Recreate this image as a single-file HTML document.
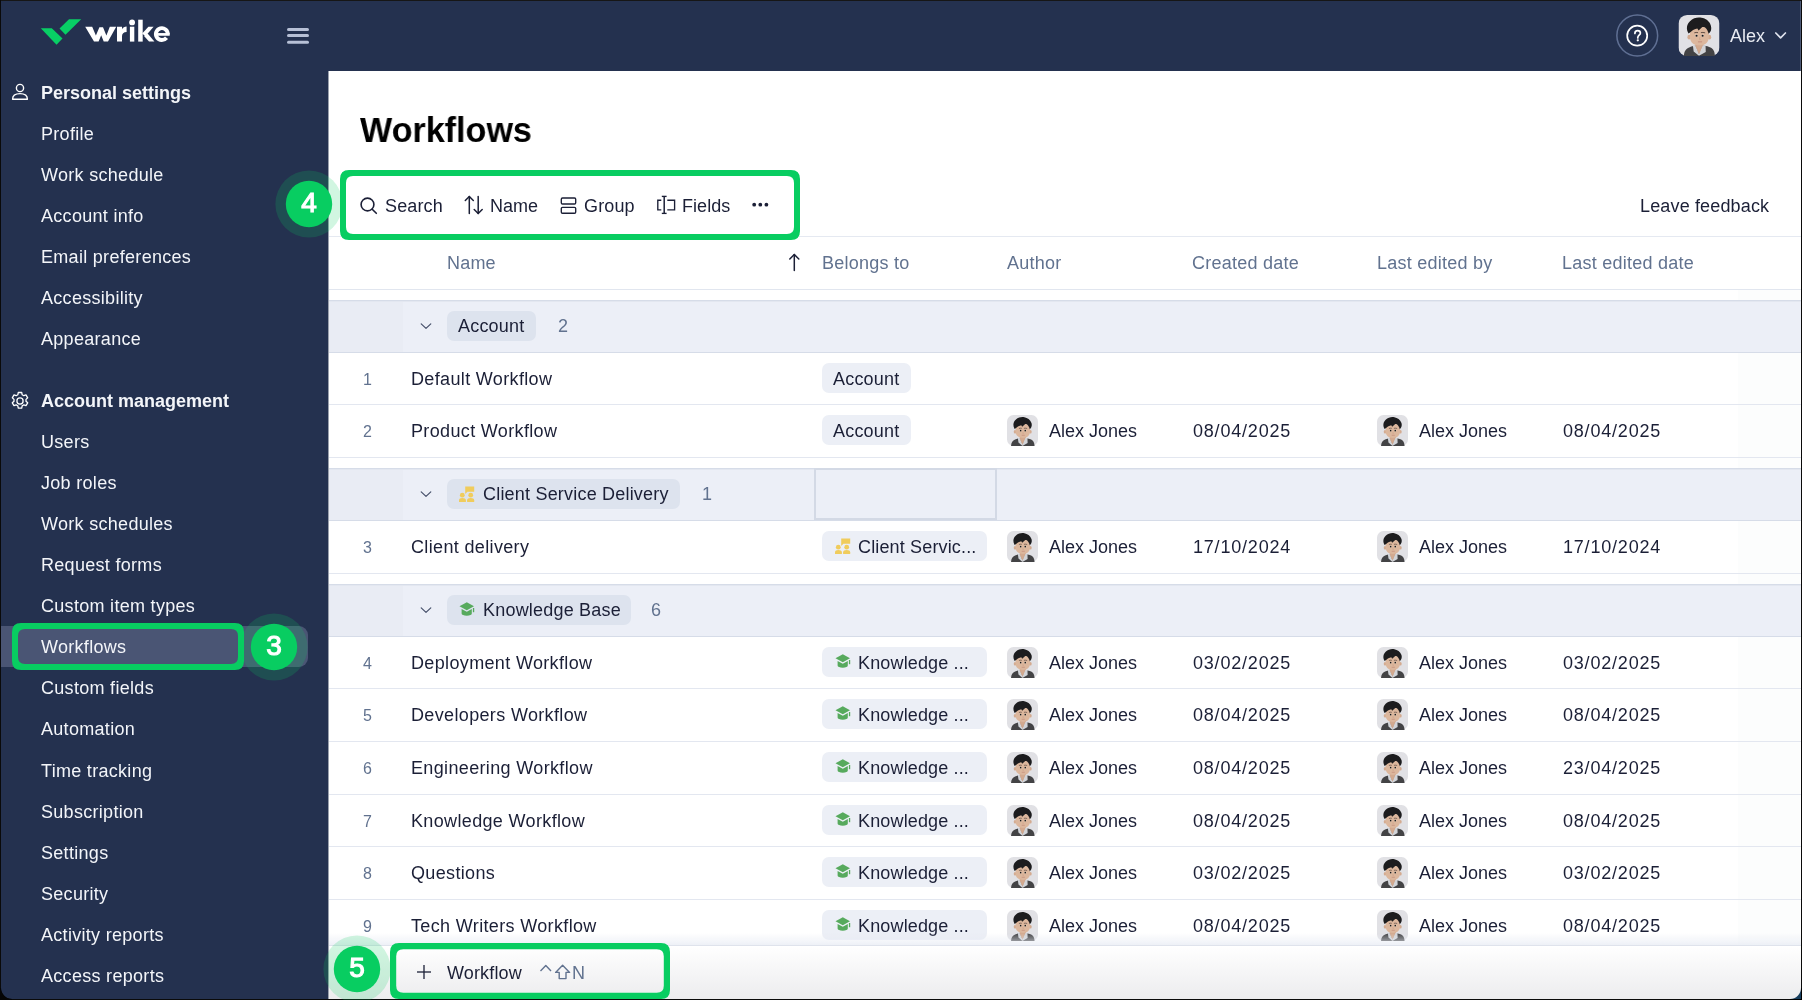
<!DOCTYPE html>
<html><head><meta charset="utf-8"><style>
html,body{margin:0;padding:0;}
body{width:1802px;height:1000px;background:#0a0a0a;position:relative;overflow:hidden;font-family:"Liberation Sans", sans-serif;}
.a{position:absolute;}
.t{position:absolute;white-space:nowrap;font-family:"Liberation Sans", sans-serif;will-change:transform;}
#win{position:absolute;left:1px;top:1px;width:1800px;height:998px;background:#24314f;border-radius:0 0 11px 11px;overflow:hidden;box-shadow:0 -1px 0 #161616;}
#panel{position:absolute;left:327px;top:70px;width:1473px;height:928px;background:#fff;}
</style></head><body>
<svg width="0" height="0" style="position:absolute"><defs><symbol id="av" viewBox="0 0 100 100">
<rect x="0" y="0" width="100" height="100" rx="21" fill="#e1e1e5"/>
<path d="M13,100 C14,88 18,82 26,79 C31,77 36,75.5 40,75 L63,75 C68,75.5 73,77 78,79 C85,82 88,88 89,100 Z" fill="#434345"/>
<path d="M41,66 L61,66 L61,78 L50,95 L41,78 Z" fill="#d3aa90"/>
<path d="M35,74 L41,74.5 L50,95 L59,74.5 L66,74 L66.5,90 L51,99 L49,99 L37,89 Z" fill="#d2d4d8"/>
<path d="M41,74.5 L50,95 L59,74.5 L57,74 L50,88 L43,74 Z" fill="#cfa78d"/>
<ellipse cx="26" cy="54" rx="4.2" ry="6" fill="#d4ab90"/>
<ellipse cx="75.5" cy="54" rx="4.2" ry="6" fill="#d4ab90"/>
<path d="M28,46 C28,34 36,27 51,27 C66,27 74,34 74,46 L74,54 C74,66 65,74 51,74 C37,74 28,66 28,54 Z" fill="#dcb79d"/>
<path d="M24.5,45 C18,34 20,22 28,15 C36,7 48,5 56,7 C66,9 75,14 79,26 C81,34 80,40 73.5,46 C72,40 69,33 64,30 C61,29 59,29 58,29.5 L49,38 L46,33 C40,34 33,38 30.5,41 Z" fill="#1c1c1e"/>
<ellipse cx="43.7" cy="50.3" rx="3" ry="2.6" fill="#f2efee"/>
<ellipse cx="59.2" cy="50.3" rx="3" ry="2.6" fill="#f2efee"/>
<circle cx="44" cy="50.5" r="2.6" fill="#161616"/>
<circle cx="58.9" cy="50.5" r="2.6" fill="#161616"/>
<path d="M38.5,43.5 C41,42.3 45,42.3 47.7,43 M54.6,43 C57,42.3 62,42.3 65,43.5" stroke="#4a3a34" stroke-width="2" fill="none"/>
<path d="M52,54 L51,59.5 L54,60" stroke="#c69a80" stroke-width="1.4" fill="none"/>
<path d="M47.5,65.5 L57.5,65.5" stroke="#c48e7c" stroke-width="2.4"/>
</symbol></defs></svg>
<div id="win"><div id="panel"></div><div class="a" style="left:1799px;top:0;width:1px;height:70px;background:#4d5a77;"></div></div>
<svg class="a" style="left:38px;top:16px;" width="140" height="32" viewBox="0 0 140 32"><polygon points="2.8,12.3 13.8,12.3 24.5,22.5 18.5,28.8" fill="#08cf65"/><polygon points="21.5,12.5 31,3.2 43.2,3.2 27.5,18.8" fill="#08cf65"/></svg>
<svg class="a" style="left:82px;top:15px;" width="92" height="30" viewBox="0 0 92 30"><g fill="#fff"><polygon points="3.2,11.7 10.2,11.7 13.9,20.6 17.4,12.3 21.0,12.3 24.4,20.6 27.8,11.7 34.2,11.7 26.0,26.6 21.7,26.6 19.2,20.2 16.6,26.6 12.0,26.6"/><path d="M35,26.6 V11.7 H40 V14.2 C41,12.5 42.6,11.6 44.6,11.6 V16.9 C41.6,16.9 40,18.6 40,21.2 V26.6 Z"/><rect x="47.9" y="11.7" width="4.4" height="14.9"/><circle cx="50.1" cy="7.4" r="2.9"/><rect x="56.2" y="4.7" width="4.5" height="21.9"/><polygon points="60.2,18.6 66.4,11.7 71.6,11.7 63.4,21.2"/><polygon points="62.0,21.0 65.6,18.4 72.4,26.6 67.0,26.6"/></g><path d="M87.70,19.40 H73.90" stroke="#fff" stroke-width="2.7"/><path d="M85.80,19.40 A5.95,5.95 0 1 0 84.54,22.76" fill="none" stroke="#fff" stroke-width="3.9"/></svg>
<svg class="a" style="left:286px;top:27px;" width="24" height="18" viewBox="0 0 24 18"><g stroke="#b7c0d6" stroke-width="3" stroke-linecap="round"><line x1="2.5" y1="2.4" x2="21.5" y2="2.4"/><line x1="2.5" y1="8.6" x2="21.5" y2="8.6"/><line x1="2.5" y1="15.2" x2="21.5" y2="15.2"/></g></svg>
<svg class="a" style="left:1615px;top:13px;" width="45" height="45" viewBox="0 0 45 45"><circle cx="22.25" cy="22.5" r="20.4" fill="none" stroke="#5f6f93" stroke-width="1.5"/><circle cx="22.2" cy="22.7" r="10" fill="none" stroke="#fff" stroke-width="1.7"/><path d="M19.9,20.4 C19.9,18.7 21,17.6 22.6,17.6 C24.3,17.6 25.4,18.7 25.4,20.1 C25.4,22.1 22.8,22.4 22.8,24.5 V25" fill="none" stroke="#fff" stroke-width="1.7" stroke-linecap="round"/><circle cx="22.8" cy="27.3" r="1.15" fill="#fff"/></svg>
<svg class="a" style="left:1678px;top:15px;" width="42" height="41" viewBox="0 0 100 100"><use href="#av"/></svg>
<div class="t" style="left:1730px;top:27px;font-size:18px;line-height:18px;color:#e8ebf2;font-weight:normal;">Alex</div>
<svg class="a" style="left:1773px;top:30px;" width="15" height="11" viewBox="0 0 15 11"><polyline points="2.8,3 7.6,7.8 12.4,3" fill="none" stroke="#e0e4ee" stroke-width="1.7" stroke-linecap="round" stroke-linejoin="round"/></svg>
<div class="a" style="left:1px;top:626px;width:307px;height:41px;background:#4a5574;border-radius:0 9px 9px 0;"></div>
<svg class="a" style="left:10px;top:82px;" width="20" height="20" viewBox="0 0 20 20"><g fill="none" stroke="#fff" stroke-width="1.4"><circle cx="10" cy="6" r="3.6"/><path d="M2.6,17.2 C2.6,13.2 6,11.6 10,11.6 C14,11.6 17.4,13.2 17.4,17.2 Z" stroke-linejoin="round"/></g></svg>
<div class="t" style="left:41px;top:84px;font-size:18px;line-height:18px;color:#f3f5f9;font-weight:bold;">Personal settings</div>
<div class="t" style="left:41px;top:125px;font-size:18px;line-height:18px;color:#f3f5f9;font-weight:normal;letter-spacing:0.3px;">Profile</div>
<div class="t" style="left:41px;top:166px;font-size:18px;line-height:18px;color:#f3f5f9;font-weight:normal;letter-spacing:0.3px;">Work schedule</div>
<div class="t" style="left:41px;top:207px;font-size:18px;line-height:18px;color:#f3f5f9;font-weight:normal;letter-spacing:0.3px;">Account info</div>
<div class="t" style="left:41px;top:248px;font-size:18px;line-height:18px;color:#f3f5f9;font-weight:normal;letter-spacing:0.3px;">Email preferences</div>
<div class="t" style="left:41px;top:289px;font-size:18px;line-height:18px;color:#f3f5f9;font-weight:normal;letter-spacing:0.3px;">Accessibility</div>
<div class="t" style="left:41px;top:330px;font-size:18px;line-height:18px;color:#f3f5f9;font-weight:normal;letter-spacing:0.3px;">Appearance</div>
<svg class="a" style="left:10px;top:391px;" width="20" height="20" viewBox="0 0 20 20"><g fill="none" stroke="#fff" stroke-width="1.3" stroke-linejoin="round"><path d="M8.3,1.5 h3.4 l0.5,2.3 l1.6,0.9 l2.2,-0.8 l1.7,2.9 l-1.7,1.6 v1.8 l1.7,1.6 l-1.7,2.9 l-2.2,-0.8 l-1.6,0.9 l-0.5,2.3 h-3.4 l-0.5,-2.3 l-1.6,-0.9 l-2.2,0.8 l-1.7,-2.9 l1.7,-1.6 v-1.8 l-1.7,-1.6 l1.7,-2.9 l2.2,0.8 l1.6,-0.9 z"/><circle cx="10" cy="10" r="3.1"/></g></svg>
<div class="t" style="left:41px;top:392px;font-size:18px;line-height:18px;color:#f3f5f9;font-weight:bold;">Account management</div>
<div class="t" style="left:41px;top:433px;font-size:18px;line-height:18px;color:#f3f5f9;font-weight:normal;letter-spacing:0.3px;">Users</div>
<div class="t" style="left:41px;top:474px;font-size:18px;line-height:18px;color:#f3f5f9;font-weight:normal;letter-spacing:0.3px;">Job roles</div>
<div class="t" style="left:41px;top:515px;font-size:18px;line-height:18px;color:#f3f5f9;font-weight:normal;letter-spacing:0.3px;">Work schedules</div>
<div class="t" style="left:41px;top:556px;font-size:18px;line-height:18px;color:#f3f5f9;font-weight:normal;letter-spacing:0.3px;">Request forms</div>
<div class="t" style="left:41px;top:597px;font-size:18px;line-height:18px;color:#f3f5f9;font-weight:normal;letter-spacing:0.3px;">Custom item types</div>
<div class="t" style="left:41px;top:638px;font-size:18px;line-height:18px;color:#f3f5f9;font-weight:normal;letter-spacing:0.3px;">Workflows</div>
<div class="t" style="left:41px;top:679px;font-size:18px;line-height:18px;color:#f3f5f9;font-weight:normal;letter-spacing:0.3px;">Custom fields</div>
<div class="t" style="left:41px;top:720px;font-size:18px;line-height:18px;color:#f3f5f9;font-weight:normal;letter-spacing:0.3px;">Automation</div>
<div class="t" style="left:41px;top:762px;font-size:18px;line-height:18px;color:#f3f5f9;font-weight:normal;letter-spacing:0.3px;">Time tracking</div>
<div class="t" style="left:41px;top:803px;font-size:18px;line-height:18px;color:#f3f5f9;font-weight:normal;letter-spacing:0.3px;">Subscription</div>
<div class="t" style="left:41px;top:844px;font-size:18px;line-height:18px;color:#f3f5f9;font-weight:normal;letter-spacing:0.3px;">Settings</div>
<div class="t" style="left:41px;top:885px;font-size:18px;line-height:18px;color:#f3f5f9;font-weight:normal;letter-spacing:0.3px;">Security</div>
<div class="t" style="left:41px;top:926px;font-size:18px;line-height:18px;color:#f3f5f9;font-weight:normal;letter-spacing:0.3px;">Activity reports</div>
<div class="t" style="left:41px;top:967px;font-size:18px;line-height:18px;color:#f3f5f9;font-weight:normal;letter-spacing:0.3px;">Access reports</div>
<div class="a" style="left:328px;top:71px;width:1px;height:928px;background:#9aa0ac;"></div>
<div class="a" style="left:1738px;top:290px;width:62px;height:655px;background:rgba(40,50,80,0.012);"></div>
<div class="t" style="left:360px;top:112px;font-size:35px;line-height:35px;color:#000;font-weight:bold;transform:scaleX(0.975);transform-origin:left">Workflows</div>
<svg class="a" style="left:358px;top:194px;" width="22" height="22" viewBox="0 0 22 22"><g fill="none" stroke="#1b1f36" stroke-width="1.6" stroke-linecap="round"><circle cx="9.5" cy="10.5" r="6.4"/><line x1="14.2" y1="15.2" x2="18.3" y2="19.3"/></g></svg>
<div class="t" style="left:385px;top:197px;font-size:18px;line-height:18px;color:#1b1f36;font-weight:normal;letter-spacing:0.15px;">Search</div>
<svg class="a" style="left:462px;top:194px;" width="24" height="22" viewBox="0 0 24 22"><g fill="none" stroke="#1b1f36" stroke-width="1.5" stroke-linecap="round" stroke-linejoin="round"><line x1="7.3" y1="2.5" x2="7.3" y2="19.5"/><polyline points="3.3,6.5 7.3,2.5 11.3,6.5"/><line x1="16.2" y1="2.5" x2="16.2" y2="19.5"/><polyline points="12.2,15.5 16.2,19.5 20.2,15.5"/></g></svg>
<div class="t" style="left:490px;top:197px;font-size:18px;line-height:18px;color:#1b1f36;font-weight:normal;">Name</div>
<svg class="a" style="left:558px;top:195px;" width="22" height="20" viewBox="0 0 22 20"><g fill="none" stroke="#1b1f36" stroke-width="1.35"><rect x="3.3" y="3" width="14.4" height="6" rx="1.2"/><rect x="3.3" y="12.4" width="14.4" height="5.8" rx="1.2"/></g></svg>
<div class="t" style="left:584px;top:197px;font-size:18px;line-height:18px;color:#1b1f36;font-weight:normal;letter-spacing:0.15px;">Group</div>
<svg class="a" style="left:655px;top:194px;" width="22" height="22" viewBox="0 0 22 22"><g fill="none" stroke="#1b1f36" stroke-width="1.35"><polyline points="6.3,6.2 2.8,6.2 2.8,15.8 6.3,15.8"/><polyline points="12.3,6.2 19.6,6.2 19.6,15.8 12.3,15.8"/><line x1="9.2" y1="2.4" x2="9.2" y2="19.4" stroke-width="1.5"/><line x1="6.8" y1="2.4" x2="11.6" y2="2.4"/><line x1="6.8" y1="19.4" x2="11.6" y2="19.4"/></g></svg>
<div class="t" style="left:682px;top:197px;font-size:18px;line-height:18px;color:#1b1f36;font-weight:normal;letter-spacing:0.05px;">Fields</div>
<svg class="a" style="left:750px;top:200px;" width="22" height="10" viewBox="0 0 22 10"><g fill="#1b1f36"><circle cx="4.2" cy="4.7" r="1.9"/><circle cx="10.3" cy="4.7" r="1.9"/><circle cx="16.4" cy="4.7" r="1.9"/></g></svg>
<div class="t" style="left:1640px;top:197px;font-size:18px;line-height:18px;color:#1b1f36;font-weight:normal;letter-spacing:0.15px;">Leave feedback</div>
<div class="a" style="left:329px;top:236px;width:1472px;height:1px;background:#e5e9f1;"></div>
<div class="a" style="left:329px;top:289px;width:1472px;height:1px;background:#e1e6ef;"></div>
<div class="t" style="left:447px;top:254px;font-size:18px;line-height:18px;color:#61728f;font-weight:normal;letter-spacing:0.2px;">Name</div>
<svg class="a" style="left:786px;top:252px;" width="16" height="20" viewBox="0 0 16 20"><g fill="none" stroke="#1b1f36" stroke-width="1.5" stroke-linecap="round" stroke-linejoin="round"><line x1="8.3" y1="2.5" x2="8.3" y2="18.5"/><polyline points="3.8,7 8.3,2.5 12.8,7"/></g></svg>
<div class="t" style="left:822px;top:254px;font-size:18px;line-height:18px;color:#61728f;font-weight:normal;letter-spacing:0.25px;">Belongs to</div>
<div class="t" style="left:1007px;top:254px;font-size:18px;line-height:18px;color:#61728f;font-weight:normal;letter-spacing:0.25px;">Author</div>
<div class="t" style="left:1192px;top:254px;font-size:18px;line-height:18px;color:#61728f;font-weight:normal;letter-spacing:0.25px;">Created date</div>
<div class="t" style="left:1377px;top:254px;font-size:18px;line-height:18px;color:#61728f;font-weight:normal;letter-spacing:0.25px;">Last edited by</div>
<div class="t" style="left:1562px;top:254px;font-size:18px;line-height:18px;color:#61728f;font-weight:normal;letter-spacing:0.25px;">Last edited date</div>
<div class="a" style="left:329px;top:300px;width:1472px;height:52px;background:#eceff7;"></div>
<div class="a" style="left:329px;top:300px;width:74px;height:52px;background:#e9ecf4;"></div>
<div class="a" style="left:329px;top:300px;width:1472px;height:1px;background:#d6dce8;"></div>
<div class="a" style="left:329px;top:301px;width:1472px;height:1px;background:#e3e7f0;"></div>
<div class="a" style="left:329px;top:352px;width:1472px;height:1px;background:#d6dce8;"></div>
<svg class="a" style="left:419px;top:321px;" width="14" height="10" viewBox="0 0 14 10"><polyline points="2.2,2.8 7,7.4 11.8,2.8" fill="none" stroke="#434d68" stroke-width="1.15" stroke-linecap="round" stroke-linejoin="round"/></svg>
<div class="a" style="left:447px;top:311px;width:89px;height:30px;background:#dde3ee;border-radius:7px;"></div>
<div class="t" style="left:458px;top:317px;font-size:18px;line-height:18px;color:#1b1f36;font-weight:normal;letter-spacing:0.2px;">Account</div>
<div class="t" style="left:558px;top:317px;font-size:18px;line-height:18px;color:#61728f;font-weight:normal;letter-spacing:0.35px;">2</div>
<div class="t" style="left:363px;top:372px;font-size:16px;line-height:16px;color:#61728f;font-weight:normal;">1</div>
<div class="t" style="left:411px;top:370px;font-size:18px;line-height:18px;color:#1b1f36;font-weight:normal;letter-spacing:0.35px;">Default Workflow</div>
<div class="a" style="left:822px;top:363px;width:89px;height:30px;background:#eceff6;border-radius:7px;"></div>
<div class="t" style="left:833px;top:370px;font-size:18px;line-height:18px;color:#1b1f36;font-weight:normal;letter-spacing:0.2px;">Account</div>
<div class="a" style="left:329px;top:404px;width:1472px;height:1px;background:#e3e7f0;"></div>
<div class="t" style="left:363px;top:424px;font-size:16px;line-height:16px;color:#61728f;font-weight:normal;">2</div>
<div class="t" style="left:411px;top:422px;font-size:18px;line-height:18px;color:#1b1f36;font-weight:normal;letter-spacing:0.35px;">Product Workflow</div>
<div class="a" style="left:822px;top:415px;width:89px;height:30px;background:#eceff6;border-radius:7px;"></div>
<div class="t" style="left:833px;top:422px;font-size:18px;line-height:18px;color:#1b1f36;font-weight:normal;letter-spacing:0.2px;">Account</div>
<svg class="a" style="left:1007px;top:415px;" width="31" height="31" viewBox="0 0 100 100"><use href="#av"/></svg>
<div class="t" style="left:1049px;top:422px;font-size:18px;line-height:18px;color:#1b1f36;font-weight:normal;">Alex Jones</div>
<div class="t" style="left:1193px;top:422px;font-size:18px;line-height:18px;color:#1b1f36;font-weight:normal;letter-spacing:0.8px;">08/04/2025</div>
<svg class="a" style="left:1377px;top:415px;" width="31" height="31" viewBox="0 0 100 100"><use href="#av"/></svg>
<div class="t" style="left:1419px;top:422px;font-size:18px;line-height:18px;color:#1b1f36;font-weight:normal;">Alex Jones</div>
<div class="t" style="left:1563px;top:422px;font-size:18px;line-height:18px;color:#1b1f36;font-weight:normal;letter-spacing:0.8px;">08/04/2025</div>
<div class="a" style="left:329px;top:457px;width:1472px;height:1px;background:#e3e7f0;"></div>
<div class="a" style="left:329px;top:468px;width:1472px;height:52px;background:#eceff7;"></div>
<div class="a" style="left:329px;top:468px;width:74px;height:52px;background:#e9ecf4;"></div>
<div class="a" style="left:329px;top:468px;width:1472px;height:1px;background:#d6dce8;"></div>
<div class="a" style="left:329px;top:469px;width:1472px;height:1px;background:#e3e7f0;"></div>
<div class="a" style="left:329px;top:520px;width:1472px;height:1px;background:#d6dce8;"></div>
<svg class="a" style="left:419px;top:489px;" width="14" height="10" viewBox="0 0 14 10"><polyline points="2.2,2.8 7,7.4 11.8,2.8" fill="none" stroke="#434d68" stroke-width="1.15" stroke-linecap="round" stroke-linejoin="round"/></svg>
<div class="a" style="left:447px;top:479px;width:233px;height:30px;background:#dde3ee;border-radius:7px;"></div>
<svg class="a" style="left:459px;top:486px;" width="16" height="16" viewBox="0 0 16 16"><g fill="#f0cc5c"><path d="M6.2,0.6 H15.2 V5.8 H8.5 L6.2,8 Z"/><circle cx="3.3" cy="9.2" r="2.4"/><path d="M0,15.9 V14.3 C0,12.9 1.4,12 3.3,12 C5.2,12 6.9,12.9 6.9,14.3 V15.9 Z"/><circle cx="11.7" cy="9.2" r="2.4"/><path d="M8.1,15.9 V14.3 C8.1,12.9 9.6,12 11.7,12 C13.8,12 15.2,12.9 15.2,14.3 V15.9 Z"/></g></svg>
<div class="t" style="left:483px;top:485px;font-size:18px;line-height:18px;color:#1b1f36;font-weight:normal;letter-spacing:0.2px;">Client Service Delivery</div>
<div class="t" style="left:702px;top:485px;font-size:18px;line-height:18px;color:#61728f;font-weight:normal;letter-spacing:0.35px;">1</div>
<div class="a" style="left:814px;top:468px;width:183px;height:52px;background:transparent;box-sizing:border-box;border:2px solid #d3d9e5;"></div>
<div class="t" style="left:363px;top:540px;font-size:16px;line-height:16px;color:#61728f;font-weight:normal;">3</div>
<div class="t" style="left:411px;top:538px;font-size:18px;line-height:18px;color:#1b1f36;font-weight:normal;letter-spacing:0.35px;">Client delivery</div>
<div class="a" style="left:822px;top:531px;width:165px;height:30px;background:#eceff6;border-radius:7px;"></div>
<svg class="a" style="left:835px;top:538px;" width="16" height="16" viewBox="0 0 16 16"><g fill="#f0cc5c"><path d="M6.2,0.6 H15.2 V5.8 H8.5 L6.2,8 Z"/><circle cx="3.3" cy="9.2" r="2.4"/><path d="M0,15.9 V14.3 C0,12.9 1.4,12 3.3,12 C5.2,12 6.9,12.9 6.9,14.3 V15.9 Z"/><circle cx="11.7" cy="9.2" r="2.4"/><path d="M8.1,15.9 V14.3 C8.1,12.9 9.6,12 11.7,12 C13.8,12 15.2,12.9 15.2,14.3 V15.9 Z"/></g></svg>
<div class="t" style="left:858px;top:538px;font-size:18px;line-height:18px;color:#1b1f36;font-weight:normal;letter-spacing:0.15px;">Client Servic...</div>
<svg class="a" style="left:1007px;top:531px;" width="31" height="31" viewBox="0 0 100 100"><use href="#av"/></svg>
<div class="t" style="left:1049px;top:538px;font-size:18px;line-height:18px;color:#1b1f36;font-weight:normal;">Alex Jones</div>
<div class="t" style="left:1193px;top:538px;font-size:18px;line-height:18px;color:#1b1f36;font-weight:normal;letter-spacing:0.8px;">17/10/2024</div>
<svg class="a" style="left:1377px;top:531px;" width="31" height="31" viewBox="0 0 100 100"><use href="#av"/></svg>
<div class="t" style="left:1419px;top:538px;font-size:18px;line-height:18px;color:#1b1f36;font-weight:normal;">Alex Jones</div>
<div class="t" style="left:1563px;top:538px;font-size:18px;line-height:18px;color:#1b1f36;font-weight:normal;letter-spacing:0.8px;">17/10/2024</div>
<div class="a" style="left:329px;top:573px;width:1472px;height:1px;background:#e3e7f0;"></div>
<div class="a" style="left:329px;top:584px;width:1472px;height:52px;background:#eceff7;"></div>
<div class="a" style="left:329px;top:584px;width:74px;height:52px;background:#e9ecf4;"></div>
<div class="a" style="left:329px;top:584px;width:1472px;height:1px;background:#d6dce8;"></div>
<div class="a" style="left:329px;top:585px;width:1472px;height:1px;background:#e3e7f0;"></div>
<div class="a" style="left:329px;top:636px;width:1472px;height:1px;background:#d6dce8;"></div>
<svg class="a" style="left:419px;top:605px;" width="14" height="10" viewBox="0 0 14 10"><polyline points="2.2,2.8 7,7.4 11.8,2.8" fill="none" stroke="#434d68" stroke-width="1.15" stroke-linecap="round" stroke-linejoin="round"/></svg>
<div class="a" style="left:447px;top:595px;width:184px;height:30px;background:#dde3ee;border-radius:7px;"></div>
<svg class="a" style="left:459px;top:602px;" width="16" height="16" viewBox="0 0 16 16"><g fill="#57aa5d"><polygon points="0.5,4.3 7.8,0.3 15,4.3 7.8,8.2"/><path d="M2.6,6.9 L7.8,9.7 L12.8,6.9 L12.8,11.6 C12.8,12.9 10.8,13.7 7.8,13.7 C4.8,13.7 2.6,12.9 2.6,11.6 Z"/><rect x="13.9" y="6" width="1.3" height="4.2"/></g></svg>
<div class="t" style="left:483px;top:601px;font-size:18px;line-height:18px;color:#1b1f36;font-weight:normal;letter-spacing:0.2px;">Knowledge Base</div>
<div class="t" style="left:651px;top:601px;font-size:18px;line-height:18px;color:#61728f;font-weight:normal;letter-spacing:0.35px;">6</div>
<div class="t" style="left:363px;top:656px;font-size:16px;line-height:16px;color:#61728f;font-weight:normal;">4</div>
<div class="t" style="left:411px;top:654px;font-size:18px;line-height:18px;color:#1b1f36;font-weight:normal;letter-spacing:0.35px;">Deployment Workflow</div>
<div class="a" style="left:822px;top:647px;width:165px;height:30px;background:#eceff6;border-radius:7px;"></div>
<svg class="a" style="left:835px;top:654px;" width="16" height="16" viewBox="0 0 16 16"><g fill="#57aa5d"><polygon points="0.5,4.3 7.8,0.3 15,4.3 7.8,8.2"/><path d="M2.6,6.9 L7.8,9.7 L12.8,6.9 L12.8,11.6 C12.8,12.9 10.8,13.7 7.8,13.7 C4.8,13.7 2.6,12.9 2.6,11.6 Z"/><rect x="13.9" y="6" width="1.3" height="4.2"/></g></svg>
<div class="t" style="left:858px;top:654px;font-size:18px;line-height:18px;color:#1b1f36;font-weight:normal;letter-spacing:0.15px;">Knowledge ...</div>
<svg class="a" style="left:1007px;top:647px;" width="31" height="31" viewBox="0 0 100 100"><use href="#av"/></svg>
<div class="t" style="left:1049px;top:654px;font-size:18px;line-height:18px;color:#1b1f36;font-weight:normal;">Alex Jones</div>
<div class="t" style="left:1193px;top:654px;font-size:18px;line-height:18px;color:#1b1f36;font-weight:normal;letter-spacing:0.8px;">03/02/2025</div>
<svg class="a" style="left:1377px;top:647px;" width="31" height="31" viewBox="0 0 100 100"><use href="#av"/></svg>
<div class="t" style="left:1419px;top:654px;font-size:18px;line-height:18px;color:#1b1f36;font-weight:normal;">Alex Jones</div>
<div class="t" style="left:1563px;top:654px;font-size:18px;line-height:18px;color:#1b1f36;font-weight:normal;letter-spacing:0.8px;">03/02/2025</div>
<div class="a" style="left:329px;top:688px;width:1472px;height:1px;background:#e3e7f0;"></div>
<div class="t" style="left:363px;top:708px;font-size:16px;line-height:16px;color:#61728f;font-weight:normal;">5</div>
<div class="t" style="left:411px;top:706px;font-size:18px;line-height:18px;color:#1b1f36;font-weight:normal;letter-spacing:0.35px;">Developers Workflow</div>
<div class="a" style="left:822px;top:699px;width:165px;height:30px;background:#eceff6;border-radius:7px;"></div>
<svg class="a" style="left:835px;top:706px;" width="16" height="16" viewBox="0 0 16 16"><g fill="#57aa5d"><polygon points="0.5,4.3 7.8,0.3 15,4.3 7.8,8.2"/><path d="M2.6,6.9 L7.8,9.7 L12.8,6.9 L12.8,11.6 C12.8,12.9 10.8,13.7 7.8,13.7 C4.8,13.7 2.6,12.9 2.6,11.6 Z"/><rect x="13.9" y="6" width="1.3" height="4.2"/></g></svg>
<div class="t" style="left:858px;top:706px;font-size:18px;line-height:18px;color:#1b1f36;font-weight:normal;letter-spacing:0.15px;">Knowledge ...</div>
<svg class="a" style="left:1007px;top:699px;" width="31" height="31" viewBox="0 0 100 100"><use href="#av"/></svg>
<div class="t" style="left:1049px;top:706px;font-size:18px;line-height:18px;color:#1b1f36;font-weight:normal;">Alex Jones</div>
<div class="t" style="left:1193px;top:706px;font-size:18px;line-height:18px;color:#1b1f36;font-weight:normal;letter-spacing:0.8px;">08/04/2025</div>
<svg class="a" style="left:1377px;top:699px;" width="31" height="31" viewBox="0 0 100 100"><use href="#av"/></svg>
<div class="t" style="left:1419px;top:706px;font-size:18px;line-height:18px;color:#1b1f36;font-weight:normal;">Alex Jones</div>
<div class="t" style="left:1563px;top:706px;font-size:18px;line-height:18px;color:#1b1f36;font-weight:normal;letter-spacing:0.8px;">08/04/2025</div>
<div class="a" style="left:329px;top:741px;width:1472px;height:1px;background:#e3e7f0;"></div>
<div class="t" style="left:363px;top:761px;font-size:16px;line-height:16px;color:#61728f;font-weight:normal;">6</div>
<div class="t" style="left:411px;top:759px;font-size:18px;line-height:18px;color:#1b1f36;font-weight:normal;letter-spacing:0.35px;">Engineering Workflow</div>
<div class="a" style="left:822px;top:752px;width:165px;height:30px;background:#eceff6;border-radius:7px;"></div>
<svg class="a" style="left:835px;top:759px;" width="16" height="16" viewBox="0 0 16 16"><g fill="#57aa5d"><polygon points="0.5,4.3 7.8,0.3 15,4.3 7.8,8.2"/><path d="M2.6,6.9 L7.8,9.7 L12.8,6.9 L12.8,11.6 C12.8,12.9 10.8,13.7 7.8,13.7 C4.8,13.7 2.6,12.9 2.6,11.6 Z"/><rect x="13.9" y="6" width="1.3" height="4.2"/></g></svg>
<div class="t" style="left:858px;top:759px;font-size:18px;line-height:18px;color:#1b1f36;font-weight:normal;letter-spacing:0.15px;">Knowledge ...</div>
<svg class="a" style="left:1007px;top:752px;" width="31" height="31" viewBox="0 0 100 100"><use href="#av"/></svg>
<div class="t" style="left:1049px;top:759px;font-size:18px;line-height:18px;color:#1b1f36;font-weight:normal;">Alex Jones</div>
<div class="t" style="left:1193px;top:759px;font-size:18px;line-height:18px;color:#1b1f36;font-weight:normal;letter-spacing:0.8px;">08/04/2025</div>
<svg class="a" style="left:1377px;top:752px;" width="31" height="31" viewBox="0 0 100 100"><use href="#av"/></svg>
<div class="t" style="left:1419px;top:759px;font-size:18px;line-height:18px;color:#1b1f36;font-weight:normal;">Alex Jones</div>
<div class="t" style="left:1563px;top:759px;font-size:18px;line-height:18px;color:#1b1f36;font-weight:normal;letter-spacing:0.8px;">23/04/2025</div>
<div class="a" style="left:329px;top:794px;width:1472px;height:1px;background:#e3e7f0;"></div>
<div class="t" style="left:363px;top:814px;font-size:16px;line-height:16px;color:#61728f;font-weight:normal;">7</div>
<div class="t" style="left:411px;top:812px;font-size:18px;line-height:18px;color:#1b1f36;font-weight:normal;letter-spacing:0.35px;">Knowledge Workflow</div>
<div class="a" style="left:822px;top:805px;width:165px;height:30px;background:#eceff6;border-radius:7px;"></div>
<svg class="a" style="left:835px;top:812px;" width="16" height="16" viewBox="0 0 16 16"><g fill="#57aa5d"><polygon points="0.5,4.3 7.8,0.3 15,4.3 7.8,8.2"/><path d="M2.6,6.9 L7.8,9.7 L12.8,6.9 L12.8,11.6 C12.8,12.9 10.8,13.7 7.8,13.7 C4.8,13.7 2.6,12.9 2.6,11.6 Z"/><rect x="13.9" y="6" width="1.3" height="4.2"/></g></svg>
<div class="t" style="left:858px;top:812px;font-size:18px;line-height:18px;color:#1b1f36;font-weight:normal;letter-spacing:0.15px;">Knowledge ...</div>
<svg class="a" style="left:1007px;top:805px;" width="31" height="31" viewBox="0 0 100 100"><use href="#av"/></svg>
<div class="t" style="left:1049px;top:812px;font-size:18px;line-height:18px;color:#1b1f36;font-weight:normal;">Alex Jones</div>
<div class="t" style="left:1193px;top:812px;font-size:18px;line-height:18px;color:#1b1f36;font-weight:normal;letter-spacing:0.8px;">08/04/2025</div>
<svg class="a" style="left:1377px;top:805px;" width="31" height="31" viewBox="0 0 100 100"><use href="#av"/></svg>
<div class="t" style="left:1419px;top:812px;font-size:18px;line-height:18px;color:#1b1f36;font-weight:normal;">Alex Jones</div>
<div class="t" style="left:1563px;top:812px;font-size:18px;line-height:18px;color:#1b1f36;font-weight:normal;letter-spacing:0.8px;">08/04/2025</div>
<div class="a" style="left:329px;top:846px;width:1472px;height:1px;background:#e3e7f0;"></div>
<div class="t" style="left:363px;top:866px;font-size:16px;line-height:16px;color:#61728f;font-weight:normal;">8</div>
<div class="t" style="left:411px;top:864px;font-size:18px;line-height:18px;color:#1b1f36;font-weight:normal;letter-spacing:0.35px;">Questions</div>
<div class="a" style="left:822px;top:857px;width:165px;height:30px;background:#eceff6;border-radius:7px;"></div>
<svg class="a" style="left:835px;top:864px;" width="16" height="16" viewBox="0 0 16 16"><g fill="#57aa5d"><polygon points="0.5,4.3 7.8,0.3 15,4.3 7.8,8.2"/><path d="M2.6,6.9 L7.8,9.7 L12.8,6.9 L12.8,11.6 C12.8,12.9 10.8,13.7 7.8,13.7 C4.8,13.7 2.6,12.9 2.6,11.6 Z"/><rect x="13.9" y="6" width="1.3" height="4.2"/></g></svg>
<div class="t" style="left:858px;top:864px;font-size:18px;line-height:18px;color:#1b1f36;font-weight:normal;letter-spacing:0.15px;">Knowledge ...</div>
<svg class="a" style="left:1007px;top:857px;" width="31" height="31" viewBox="0 0 100 100"><use href="#av"/></svg>
<div class="t" style="left:1049px;top:864px;font-size:18px;line-height:18px;color:#1b1f36;font-weight:normal;">Alex Jones</div>
<div class="t" style="left:1193px;top:864px;font-size:18px;line-height:18px;color:#1b1f36;font-weight:normal;letter-spacing:0.8px;">03/02/2025</div>
<svg class="a" style="left:1377px;top:857px;" width="31" height="31" viewBox="0 0 100 100"><use href="#av"/></svg>
<div class="t" style="left:1419px;top:864px;font-size:18px;line-height:18px;color:#1b1f36;font-weight:normal;">Alex Jones</div>
<div class="t" style="left:1563px;top:864px;font-size:18px;line-height:18px;color:#1b1f36;font-weight:normal;letter-spacing:0.8px;">03/02/2025</div>
<div class="a" style="left:329px;top:899px;width:1472px;height:1px;background:#e3e7f0;"></div>
<div class="t" style="left:363px;top:919px;font-size:16px;line-height:16px;color:#61728f;font-weight:normal;">9</div>
<div class="t" style="left:411px;top:917px;font-size:18px;line-height:18px;color:#1b1f36;font-weight:normal;letter-spacing:0.35px;">Tech Writers Workflow</div>
<div class="a" style="left:822px;top:910px;width:165px;height:30px;background:#eceff6;border-radius:7px;"></div>
<svg class="a" style="left:835px;top:917px;" width="16" height="16" viewBox="0 0 16 16"><g fill="#57aa5d"><polygon points="0.5,4.3 7.8,0.3 15,4.3 7.8,8.2"/><path d="M2.6,6.9 L7.8,9.7 L12.8,6.9 L12.8,11.6 C12.8,12.9 10.8,13.7 7.8,13.7 C4.8,13.7 2.6,12.9 2.6,11.6 Z"/><rect x="13.9" y="6" width="1.3" height="4.2"/></g></svg>
<div class="t" style="left:858px;top:917px;font-size:18px;line-height:18px;color:#1b1f36;font-weight:normal;letter-spacing:0.15px;">Knowledge ...</div>
<svg class="a" style="left:1007px;top:910px;" width="31" height="31" viewBox="0 0 100 100"><use href="#av"/></svg>
<div class="t" style="left:1049px;top:917px;font-size:18px;line-height:18px;color:#1b1f36;font-weight:normal;">Alex Jones</div>
<div class="t" style="left:1193px;top:917px;font-size:18px;line-height:18px;color:#1b1f36;font-weight:normal;letter-spacing:0.8px;">08/04/2025</div>
<svg class="a" style="left:1377px;top:910px;" width="31" height="31" viewBox="0 0 100 100"><use href="#av"/></svg>
<div class="t" style="left:1419px;top:917px;font-size:18px;line-height:18px;color:#1b1f36;font-weight:normal;">Alex Jones</div>
<div class="t" style="left:1563px;top:917px;font-size:18px;line-height:18px;color:#1b1f36;font-weight:normal;letter-spacing:0.8px;">08/04/2025</div>
<div class="a" style="left:329px;top:933px;width:1472px;height:12px;background:linear-gradient(rgba(232,236,244,0),rgba(232,236,244,0.75));"></div>
<div class="a" style="left:329px;top:945px;width:1472px;height:54px;background:linear-gradient(#ffffff,#ececee);border-top:1px solid #dfe3ec;box-sizing:border-box;"></div>
<svg class="a" style="left:414px;top:962px;" width="20" height="20" viewBox="0 0 20 20"><g stroke="#1b1f36" stroke-width="1.3"><line x1="3" y1="10" x2="17" y2="10"/><line x1="10" y1="3" x2="10" y2="17"/></g></svg>
<div class="t" style="left:447px;top:964px;font-size:18px;line-height:18px;color:#1b1f36;font-weight:normal;letter-spacing:0.15px;">Workflow</div>
<svg class="a" style="left:538px;top:962px;" width="50" height="20" viewBox="0 0 50 20"><g fill="none" stroke="#61728f" stroke-width="1.4" stroke-linejoin="round"><polyline points="2.5,9 7.8,3.6 13,9"/><path d="M17.6,10.4 L24.6,3.2 L31.6,10.4 H28 V16.6 H21.2 V10.4 Z"/></g></svg>
<div class="t" style="left:572px;top:964px;font-size:18px;line-height:18px;color:#61728f;font-weight:normal;letter-spacing:0.35px;">N</div>
<svg class="a" style="left:340px;top:170px" width="460" height="70" viewBox="0 0 460 70"><path d="M9,0 H451 Q460,0 460,9 V61 Q460,70 451,70 H9 Q0,70 0,61 V9 Q0,0 9,0 Z M13,6 H447 Q454,6 454,13 V57 Q454,64 447,64 H13 Q6,64 6,57 V13 Q6,6 13,6 Z" fill="#08cd61" fill-rule="evenodd"/></svg>
<svg class="a" style="left:275.3px;top:169.7px" width="68" height="68" viewBox="0 0 68 68"><circle cx="34" cy="34" r="33.6" fill="rgba(10,205,98,0.19)"/><circle cx="34" cy="34" r="23.2" fill="#08cd61"/></svg>
<div class="t" style="left:286.3px;top:188.7px;width:46px;text-align:center;font-size:28px;line-height:28px;color:#fff;font-weight:normal;-webkit-text-stroke:1.1px #fff;">4</div>
<svg class="a" style="left:12px;top:623px" width="232" height="47" viewBox="0 0 232 47"><path d="M9,0 H223 Q232,0 232,9 V38 Q232,47 223,47 H9 Q0,47 0,38 V9 Q0,0 9,0 Z M13,6 H219 Q226,6 226,13 V34 Q226,41 219,41 H13 Q6,41 6,34 V13 Q6,6 13,6 Z" fill="#08cd61" fill-rule="evenodd"/></svg>
<svg class="a" style="left:239.60000000000002px;top:612.6px" width="68" height="68" viewBox="0 0 68 68"><circle cx="34" cy="34" r="33.6" fill="rgba(10,205,98,0.19)"/><circle cx="34" cy="34" r="23.2" fill="#08cd61"/></svg>
<div class="t" style="left:250.60000000000002px;top:631.6px;width:46px;text-align:center;font-size:28px;line-height:28px;color:#fff;font-weight:normal;-webkit-text-stroke:1.1px #fff;">3</div>
<svg class="a" style="left:390px;top:943px" width="280" height="56" viewBox="0 0 280 56"><path d="M9,0 H271 Q280,0 280,9 V47 Q280,56 271,56 H9 Q0,56 0,47 V9 Q0,0 9,0 Z M13.2,6.2 H266.8 Q273.8,6.2 273.8,13.2 V42.800000000000004 Q273.8,49.800000000000004 266.8,49.800000000000004 H13.2 Q6.2,49.800000000000004 6.2,42.800000000000004 V13.2 Q6.2,6.2 13.2,6.2 Z" fill="#08cd61" fill-rule="evenodd"/></svg>
<svg class="a" style="left:322.8px;top:934.8px" width="68" height="68" viewBox="0 0 68 68"><circle cx="34" cy="34" r="33.6" fill="rgba(10,205,98,0.19)"/><circle cx="34" cy="34" r="23.2" fill="#08cd61"/></svg>
<div class="t" style="left:333.8px;top:953.8px;width:46px;text-align:center;font-size:28px;line-height:28px;color:#fff;font-weight:normal;-webkit-text-stroke:1.1px #fff;">5</div>
<svg class="a" style="left:1790px;top:988px" width="12" height="12"><path d="M11,0 A11,11 0 0 1 0,11 L0,12 L12,12 L12,0 Z" fill="#173e5e"/><rect x="11" y="0" width="1" height="12" fill="#000"/><rect x="0" y="11" width="12" height="1" fill="#000"/></svg>
<svg class="a" style="left:0;top:988px" width="12" height="12"><path d="M1,0 A11,11 0 0 0 12,11 L12,12 L0,12 L0,0 Z" fill="#050505"/></svg>
</body></html>
